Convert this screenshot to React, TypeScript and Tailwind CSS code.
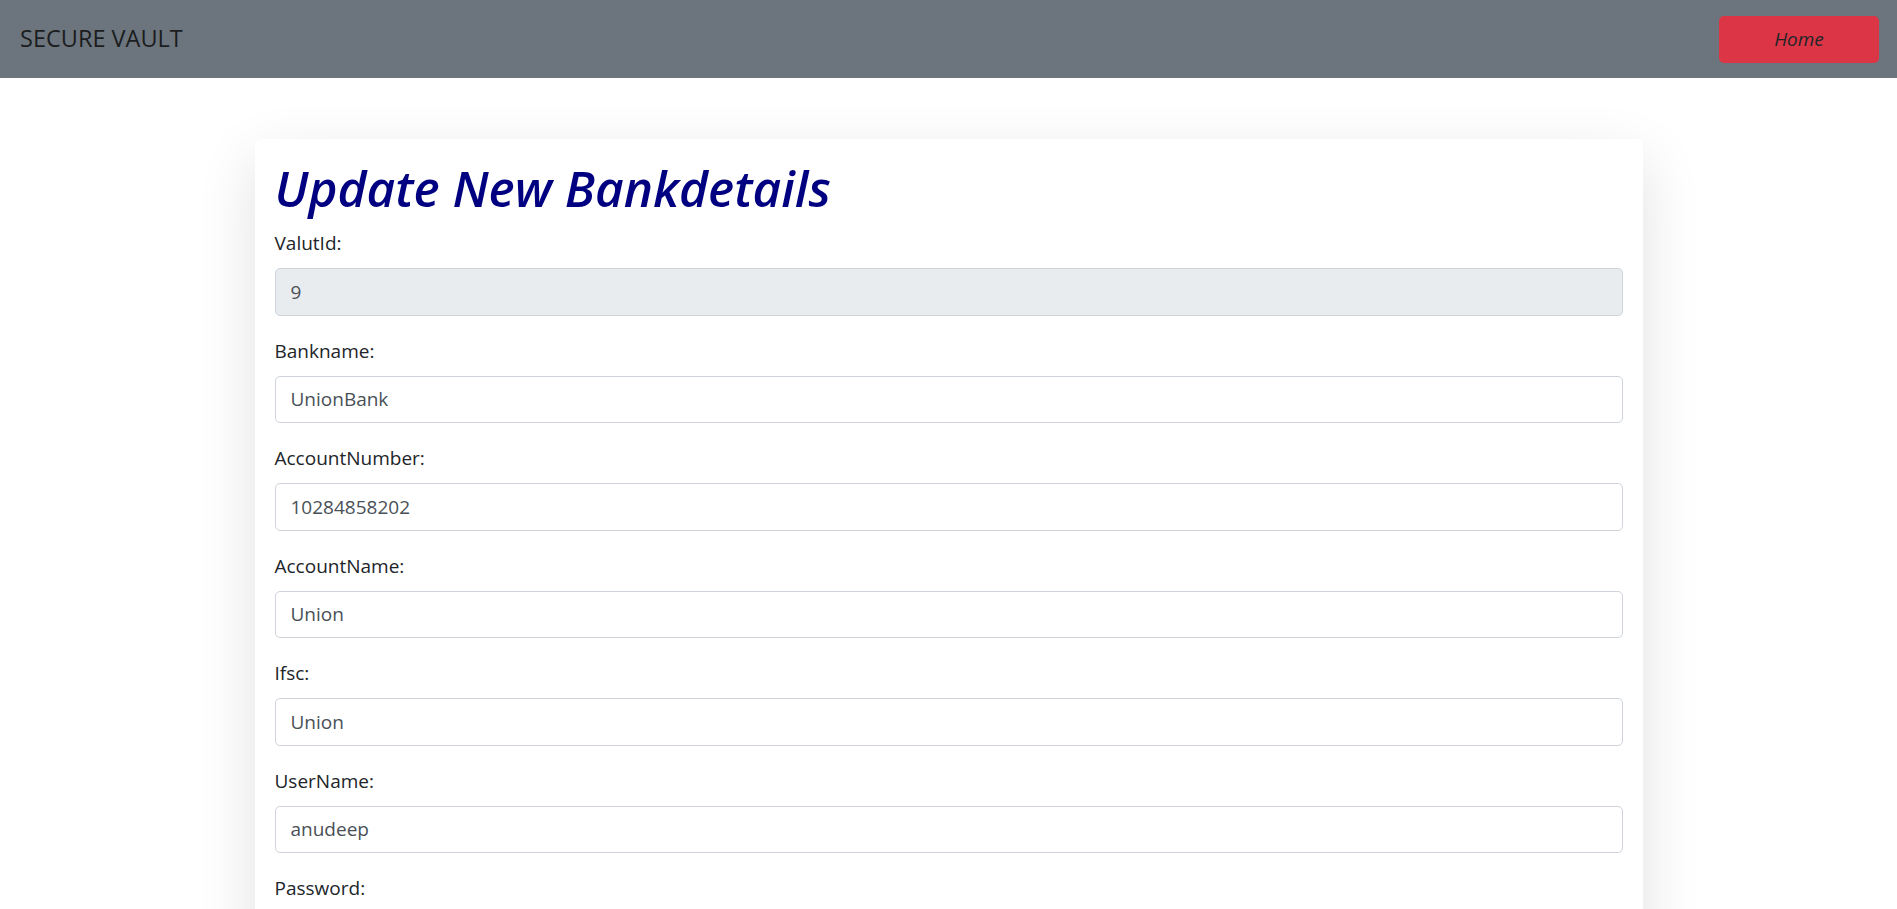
import { useState } from "react";

type Field = {
  label: string;
  name: string;
  value: string;
  disabled?: boolean;
  type?: string;
};

const initialFields: Field[] = [
  { label: "ValutId:", name: "vaultId", value: "9", disabled: true },
  { label: "Bankname:", name: "bankName", value: "UnionBank" },
  { label: "AccountNumber:", name: "accountNumber", value: "10284858202" },
  { label: "AccountName:", name: "accountName", value: "Union" },
  { label: "Ifsc:", name: "ifsc", value: "Union" },
  { label: "UserName:", name: "userName", value: "anudeep" },
  { label: "Password:", name: "password", value: "anudeep123" },
];

export default function App() {
  const [fields, setFields] = useState(initialFields);

  function update(name: string, value: string) {
    setFields((list) => list.map((f) => (f.name === name ? { ...f, value } : f)));
  }

  return (
    <div className="min-h-screen bg-white font-['Open_Sans',sans-serif] text-[#212529]">
      <nav className="flex h-[78px] items-center justify-between bg-[#6c757d] pl-[20px] pr-[18px]">
        <span className="text-[23.5px] leading-none text-[#1b1d20]">SECURE VAULT</span>
        <button
          className="h-[47px] w-[160px] rounded-[5px] bg-[#dc3545] text-[19px] italic text-[#212529]"
          type="button"
        >
          Home
        </button>
      </nav>

      <div className="pb-12 pt-[61px]">
        <form
          className="mx-auto w-[1388px] rounded-[5px] bg-white p-[20px] shadow-[0_20px_60px_rgba(0,0,0,0.12)]"
          onSubmit={(e) => e.preventDefault()}
        >
          <h1 className="mb-[10px] text-[49.5px] font-semibold italic leading-[59px] text-[#000080]">
            Update New Bankdetails
          </h1>
          {fields.map((field) => (
            <div className="mb-[20px]" key={field.name}>
              <label className="mb-[10px] block text-[19px] leading-[30px]" htmlFor={field.name}>
                {field.label}
              </label>
              <input
                className="block h-[47.5px] w-full rounded-[5px] border border-[#ced4da] px-[15px] text-[19px] text-[#495057] outline-none disabled:bg-[#e9ecef]"
                disabled={field.disabled}
                id={field.name}
                onChange={(e) => update(field.name, e.target.value)}
                type={field.type ?? "text"}
                value={field.value}
              />
            </div>
          ))}
          <button
            className="h-[47px] rounded-[5px] bg-[#0d6efd] px-[20px] text-[19px] text-white"
            type="submit"
          >
            Update
          </button>
        </form>
      </div>
    </div>
  );
}
